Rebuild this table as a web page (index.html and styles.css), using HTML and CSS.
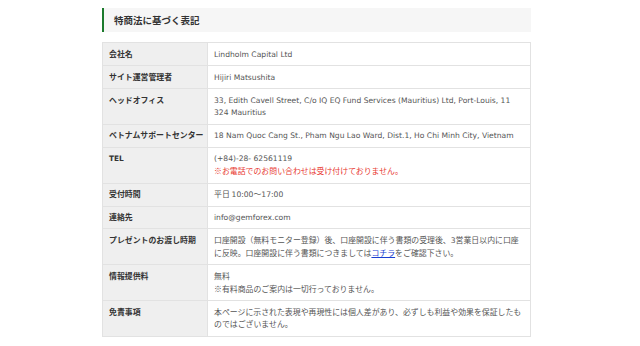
FILE: index.html
```html
<!DOCTYPE html>
<html lang="ja">
<head>
<meta charset="utf-8">
<link rel="stylesheet" href="styles.css">
</head>
<body>
<div class="wrap">
  <h2 class="heading">特商法に基づく表記</h2>
  <table class="info">
    <colgroup><col class="c-label"><col></colgroup>
    <tr><th>会社名</th><td><span class="lat">Lindholm Capital Ltd</span></td></tr>
    <tr><th>サイト運営管理者</th><td><span class="lat">Hijiri Matsushita</span></td></tr>
    <tr><th>ヘッドオフィス</th><td><span class="lat">33, Edith Cavell Street, C/o IQ EQ Fund Services (Mauritius) Ltd, Port-Louis, 11 324 Mauritius</span></td></tr>
    <tr><th>ベトナムサポートセンター</th><td><span class="lat">18 Nam Quoc Cang St., Pham Ngu Lao Ward, Dist.1, Ho Chi Minh City, Vietnam</span></td></tr>
    <tr><th><span class="lat">TEL</span></th><td><span class="lat">(+84)-28- 62561119</span><br><span class="red">※お電話でのお問い合わせは受け付けておりません。</span></td></tr>
    <tr><th>受付時間</th><td>平日 <span class="lat">10:00</span>～<span class="lat">17:00</span></td></tr>
    <tr><th>連絡先</th><td><span class="lat">info@gemforex.com</span></td></tr>
    <tr><th>プレゼントのお渡し時期</th><td>口座開設（無料モニター登録）後、口座開設に伴う書類の受理後、<span class="lat">3</span>営業日以内に口座に反映。口座開設に伴う書類につきましては<a class="link" href="#">コチラ</a>をご確認下さい。</td></tr>
    <tr><th>情報提供料</th><td>無料<br>※有料商品のご案内は一切行っておりません。</td></tr>
    <tr><th>免責事項</th><td>本ページに示された表現や再現性には個人差があり、必ずしも利益や効果を保証したものではございません。</td></tr>
  </table>
</div>
</body>
</html>
```

FILE: styles.css
```css
html, body {
  margin: 0;
  padding: 0;
  background: #fff;
}
body {
  font-family: "Noto Sans CJK JP", "Noto Sans", sans-serif;
  color: #555;
}
.wrap {
  width: 429px;
  margin-left: 102px;
  padding-top: 8px;
}
.heading {
  margin: 0;
  height: 24px;
  line-height: 24px;
  background: #f6f6f6;
  border-left: 2px solid #1b7a2c;
  padding-left: 10px;
  font-size: 9.5px;
  font-weight: bold;
  color: #333;
}
.info {
  margin-top: 10px;
  width: 429px;
  border-collapse: collapse;
  table-layout: fixed;
  font-size: 7.9px;
  line-height: 12.8px;
}
.c-label {
  width: 105px;
}
.info th, .info td {
  border: 1px solid #e2e2e2;
  padding: 4.6px 6px;
  text-align: left;
  vertical-align: top;
}
.info th {
  padding-right: 1px;
  background: #efefef;
  color: #333;
  font-weight: bold;
  white-space: nowrap;
}
.info td {
  background: #fff;
  padding-right: 4px;
}
.lat {
  font-family: "DejaVu Sans", sans-serif;
  font-size: 7.6px;
  line-height: 0;
}
.info th .lat {
  font-size: 7.4px;
}
.red {
  color: #e8382f;
}
.link {
  color: #1a3fd1;
  text-decoration: underline;
}
```
